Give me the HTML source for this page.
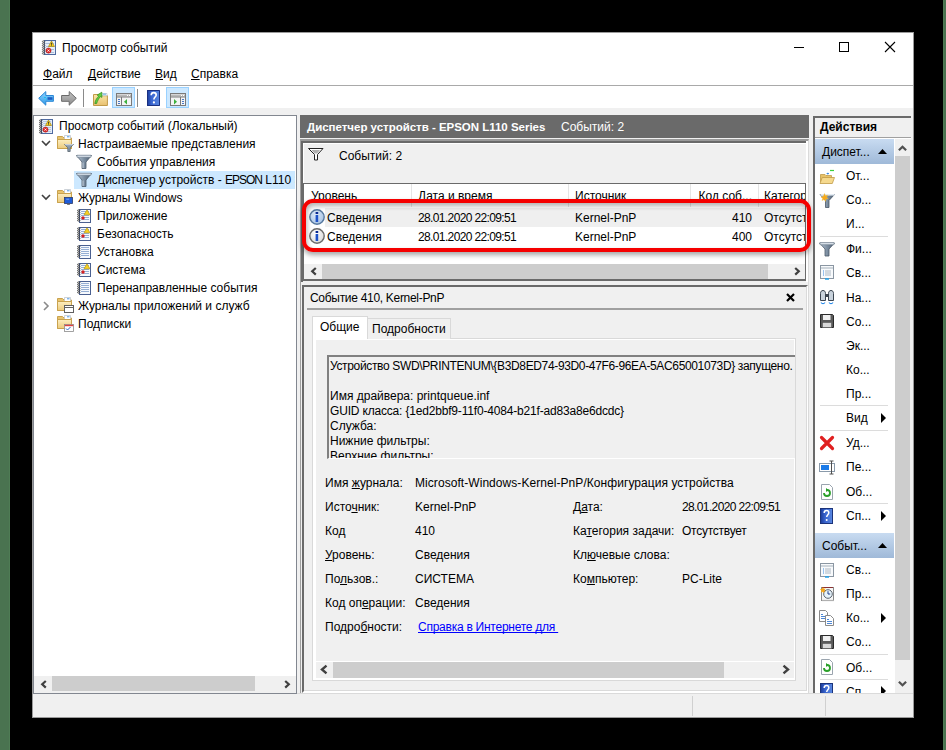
<!DOCTYPE html>
<html><head><meta charset="utf-8">
<style>
*{margin:0;padding:0;box-sizing:border-box}
html,body{width:946px;height:750px;overflow:hidden;background:#000;font-family:"Liberation Sans",sans-serif;font-size:12px;color:#000}
.a{position:absolute}
.t{position:absolute;white-space:nowrap;line-height:16px;height:16px}
.b{font-weight:bold}
u{text-decoration:underline;text-underline-offset:1px;text-decoration-skip-ink:none}
svg{position:absolute;overflow:visible}
.sep{position:absolute;height:1px;background:#dcdcdc}
</style></head><body>
<div class="a" style="left:0;top:0;width:10px;height:750px;background:#4a7350"></div>
<div class="a" style="left:9px;top:0;width:1px;height:750px;background:#4f7d55"></div>
<div class="a" style="left:943px;top:0;width:3px;height:750px;background:#4a7350"></div>
<div class="a" style="left:943px;top:0;width:1px;height:750px;background:#4f7d55"></div>

<!-- window -->
<div class="a" style="left:32px;top:32px;width:882px;height:686px;background:#f0f0f0;border:1px solid #9a9a9a"></div>
<div class="a" style="left:33px;top:33px;width:880px;height:75px;background:#fff"></div>
<div class="a" style="left:33px;top:85px;width:880px;height:1px;background:#a9a9a9"></div>

<!-- TITLE -->
<svg style="left:42px;top:40px" width="14" height="15" viewBox="0 0 14 15">
 <rect x="2.5" y="0.5" width="11" height="14" fill="#e6eef8" stroke="#4f6aa0"/>
 <path d="M4 3.5h8M4 6.5h8M4 9.5h8M4 12.5h8" stroke="#a9bedc"/>
 <ellipse cx="1.6" cy="1.5" rx="1.2" ry=".75" fill="none" stroke="#4a4a4a" stroke-width=".8"/><ellipse cx="1.6" cy="3.5" rx="1.2" ry=".75" fill="none" stroke="#4a4a4a" stroke-width=".8"/><ellipse cx="1.6" cy="5.5" rx="1.2" ry=".75" fill="none" stroke="#4a4a4a" stroke-width=".8"/><ellipse cx="1.6" cy="7.5" rx="1.2" ry=".75" fill="none" stroke="#4a4a4a" stroke-width=".8"/><ellipse cx="1.6" cy="9.5" rx="1.2" ry=".75" fill="none" stroke="#4a4a4a" stroke-width=".8"/><ellipse cx="1.6" cy="11.5" rx="1.2" ry=".75" fill="none" stroke="#4a4a4a" stroke-width=".8"/><ellipse cx="1.6" cy="13.5" rx="1.2" ry=".75" fill="none" stroke="#4a4a4a" stroke-width=".8"/>
 <path d="M9.5 1l3 5.5h-6z" fill="#f8d020" stroke="#9a7a00" stroke-width=".6"/>
 <path d="M9.5 2.8v2M9.5 5.3v.6" stroke="#333" stroke-width=".9"/>
 <circle cx="6.5" cy="10.6" r="2.6" fill="#e02828" stroke="#a01818" stroke-width=".5"/>
 <path d="M5.5 9.6l2 2M7.5 9.6l-2 2" stroke="#fff" stroke-width=".9"/>
</svg>
<div class="t" style="left:62px;top:40px">Просмотр событий</div>
<div class="a" style="left:794px;top:47px;width:10px;height:1px;background:#000"></div>
<div class="a" style="left:839px;top:42px;width:10px;height:10px;border:1px solid #000"></div>
<svg style="left:885px;top:42px" width="10" height="10" viewBox="0 0 10 10"><path d="M0 0L10 10M10 0L0 10" stroke="#000" stroke-width="1.1"/></svg>

<!-- MENU -->
<div class="t" style="left:43px;top:66px"><u>Ф</u>айл</div>
<div class="t" style="left:88px;top:66px"><u>Д</u>ействие</div>
<div class="t" style="left:155px;top:66px"><u>В</u>ид</div>
<div class="t" style="left:191px;top:66px"><u>С</u>правка</div>

<!-- TOOLBAR -->
<svg style="left:38px;top:91px" width="16" height="15" viewBox="0 0 16 15">
 <defs><linearGradient id="bk" x1="0" y1="0" x2="0" y2="1"><stop offset="0" stop-color="#8fd4ff"/><stop offset="1" stop-color="#2f9be8"/></linearGradient></defs>
 <path d="M0.7 7.3L7.8 0.6v3.9h7.6v5.8H7.8v3.9z" fill="url(#bk)" stroke="#2a86d6" stroke-width="1"/>
 <path d="M9.5 6.2h5v2.6h-5z" fill="#1d5cc0"/>
 <path d="M6 6.5h2M8 8h1" stroke="#19c0f0" stroke-width="1"/>
</svg>
<svg style="left:61px;top:91px" width="16" height="15" viewBox="0 0 16 15">
 <defs><linearGradient id="fw" x1="0" y1="0" x2="0" y2="1"><stop offset="0" stop-color="#c4c4c4"/><stop offset="1" stop-color="#8a8a8a"/></linearGradient></defs>
 <path d="M15.3 7.3L8.2 0.6v3.9H0.6v5.8h7.6v3.9z" fill="url(#fw)" stroke="#6a6a6a" stroke-width="1"/>
</svg>
<div class="a" style="left:83px;top:89px;width:1px;height:18px;background:#8a8a8a"></div>
<svg style="left:93px;top:91px" width="15" height="15" viewBox="0 0 15 15">
 <defs><linearGradient id="fo" x1="0" y1="0" x2="0" y2="1"><stop offset="0" stop-color="#fbe6a8"/><stop offset="1" stop-color="#e8c070"/></linearGradient></defs>
 <path d="M0.5 3.5h5l1 1.2h7.9v9.8H0.5z" fill="url(#fo)" stroke="#c09a48"/>
 <path d="M9 2.5h5v2.2H9z" fill="#fff" stroke="#a8b8c8" stroke-width=".6"/>
 <path d="M10 3.2h3" stroke="#3a9ae0" stroke-width=".8"/>
 <path d="M1.8 12.5C2.5 9 3.8 7 5.6 5.2L4.2 4.1 8.8 1.2 8.9 6.4 7.3 5.6C5.8 7.5 4.6 9.6 3.6 12.5z" fill="#62d040" stroke="#2e8a1e" stroke-width=".7"/>
</svg>
<div class="a" style="left:112px;top:87px;width:23px;height:21px;background:#cce8ff;border:1px solid #99d1ff"></div>
<svg style="left:116px;top:93px" width="16" height="13" viewBox="0 0 16 13">
 <rect x="0.5" y="0.5" width="15" height="12" fill="#f4f4f4" stroke="#7a7a7a"/>
 <path d="M1 2.5h14" stroke="#b8b8b8" stroke-width="2"/>
 <path d="M11 2.5h1M13 2.5h1" stroke="#fff" stroke-width="1"/>
 <path d="M1 4h14" stroke="#7a7a7a"/>
 <path d="M5.5 4v8.5" stroke="#7a7a7a"/>
 <path d="M2 6.5h2M2 8.5h2M2 10.5h2" stroke="#4a7ac8" stroke-width="1"/>
 <path d="M11 6v5.5L8 8.7z" fill="#3cb03c"/>
</svg>
<div class="a" style="left:137px;top:89px;width:1px;height:18px;background:#8a8a8a"></div>
<svg style="left:147px;top:90px" width="13" height="16" viewBox="0 0 13 16">
 <defs><linearGradient id="hp" x1="0" y1="0" x2="1" y2="0"><stop offset="0" stop-color="#1a3a98"/><stop offset=".35" stop-color="#3a66d0"/><stop offset="1" stop-color="#5a88e0"/></linearGradient></defs>
 <rect x="0" y="0" width="13" height="16" fill="url(#hp)"/>
 <path d="M0.5 0.5h12v15h-12z" fill="none" stroke="#1a3080" stroke-width="1"/>
 <path d="M4.2 5.2C4.2 3.4 5.2 2.6 6.7 2.6S9.2 3.5 9.2 5c0 2-2.3 2.2-2.3 4.6" fill="none" stroke="#fff" stroke-width="1.6"/>
 <circle cx="6.9" cy="12.4" r="1.1" fill="#fff"/>
</svg>
<div class="a" style="left:166px;top:87px;width:23px;height:21px;background:#cce8ff;border:1px solid #99d1ff"></div>
<svg style="left:170px;top:93px" width="16" height="13" viewBox="0 0 16 13">
 <rect x="0.5" y="0.5" width="15" height="12" fill="#f4f4f4" stroke="#7a7a7a"/>
 <path d="M1 2.5h14" stroke="#b8b8b8" stroke-width="2"/>
 <path d="M11 2.5h1M13 2.5h1" stroke="#fff" stroke-width="1"/>
 <path d="M1 4h14" stroke="#7a7a7a"/>
 <path d="M10.5 4v8.5" stroke="#7a7a7a"/>
 <path d="M12 6.5h2M12 8.5h2M12 10.5h2" stroke="#4a7ac8" stroke-width="1"/>
 <path d="M4 6v5.5L7 8.7z" fill="#3cb03c"/>
</svg>

<!-- LEFT PANE -->
<div class="a" style="left:33px;top:115px;width:264px;height:579px;background:#fff;border:1px solid #828790"></div>
<!-- tree -->
<svg style="left:39px;top:119px" width="14" height="15" viewBox="0 0 14 15">
 <rect x="2.5" y="0.5" width="11" height="14" fill="#e6eef8" stroke="#4f6aa0"/>
 <path d="M4 2.5h8M4 4.5h8M4 6.5h8M4 8.5h8M4 10.5h8M4 12.5h8" stroke="#a9bedc" stroke-width=".8"/>
 <ellipse cx="1.7" cy="1.5" rx="1.2" ry=".7" fill="none" stroke="#3a3a3a" stroke-width=".8"/><ellipse cx="1.7" cy="3.5" rx="1.2" ry=".7" fill="none" stroke="#3a3a3a" stroke-width=".8"/><ellipse cx="1.7" cy="5.5" rx="1.2" ry=".7" fill="none" stroke="#3a3a3a" stroke-width=".8"/><ellipse cx="1.7" cy="7.5" rx="1.2" ry=".7" fill="none" stroke="#3a3a3a" stroke-width=".8"/><ellipse cx="1.7" cy="9.5" rx="1.2" ry=".7" fill="none" stroke="#3a3a3a" stroke-width=".8"/><ellipse cx="1.7" cy="11.5" rx="1.2" ry=".7" fill="none" stroke="#3a3a3a" stroke-width=".8"/><ellipse cx="1.7" cy="13.5" rx="1.2" ry=".7" fill="none" stroke="#3a3a3a" stroke-width=".8"/>
 <path d="M9.5 1l3 5.5h-6z" fill="#f8d020" stroke="#9a7a00" stroke-width=".6"/>
 <path d="M9.5 2.8v2M9.5 5.3v.6" stroke="#333" stroke-width=".9"/>
 <circle cx="6.5" cy="10.6" r="2.6" fill="#e02828" stroke="#a01818" stroke-width=".5"/>
 <path d="M5.5 9.6l2 2M7.5 9.6l-2 2" stroke="#fff" stroke-width=".9"/>
</svg>
<div class="t" style="left:59px;top:118px">Просмотр событий (Локальный)</div>
<svg style="left:41px;top:140px" width="10" height="7" viewBox="0 0 10 7"><path d="M1 1l4 4 4-4" fill="none" stroke="#404040" stroke-width="1.6"/></svg>
<svg style="left:57px;top:135px" width="17" height="17" viewBox="0 0 17 17">
 <defs><linearGradient id="fd135" x1="0" y1="0" x2="0" y2="1"><stop offset="0" stop-color="#fdeec0"/><stop offset="1" stop-color="#eccb7c"/></linearGradient></defs>
 <path d="M0.5 1.5h5l1.5 1.5h7.5v10.5H0.5z" fill="#e8c46e" stroke="#c9a24e"/>
 <path d="M7.5 0.5h6v4h-6z" fill="#fff" stroke="#b8c0c8" stroke-width=".7"/>
 <path d="M10 1.8h2.5" stroke="#3a8ae0" stroke-width=".9"/>
 <path d="M0.5 4.5h14v9H0.5z" fill="url(#fd135)" stroke="#c9a24e"/>
 <path d="M7.5 9.5h9l-3.3 3.3v3.7h-2.4v-3.7z" fill="#8a9aaa" stroke="#4d5a66" stroke-width=".7"/><path d="M8 9.7h8" stroke="#dfe6ee" stroke-width="1"/>
</svg>
<div class="t" style="left:78px;top:136px">Настраиваемые представления</div>
<svg style="left:76px;top:154px" width="16" height="15" viewBox="0 0 16 15">
 <defs><linearGradient id="fg1" x1="0" x2="1"><stop offset="0" stop-color="#b8c6d4"/><stop offset=".5" stop-color="#7d8fa2"/><stop offset="1" stop-color="#4e5e70"/></linearGradient></defs>
 <path d="M0.5 1.5h15l-5.5 6.5v6.5h-4v-6.5z" fill="url(#fg1)" stroke="#4a5868" stroke-width=".8"/>
 <path d="M1 1.2h14v2H1z" fill="#e4ecf4" stroke="#6a7888" stroke-width=".6"/>
 <path d="M7 8.5v5.5" stroke="#c8d4e0" stroke-width=".9"/>
</svg>
<div class="t" style="left:97px;top:154px">События управления</div>
<div class="a" style="left:74px;top:171px;width:221px;height:18px;background:#cce8ff"></div>
<svg style="left:76px;top:172px" width="16" height="15" viewBox="0 0 16 15">
 <defs><linearGradient id="fg2" x1="0" x2="1"><stop offset="0" stop-color="#b8c6d4"/><stop offset=".5" stop-color="#7d8fa2"/><stop offset="1" stop-color="#4e5e70"/></linearGradient></defs>
 <path d="M0.5 1.5h15l-5.5 6.5v6.5h-4v-6.5z" fill="url(#fg2)" stroke="#4a5868" stroke-width=".8"/>
 <path d="M1 1.2h14v2H1z" fill="#e4ecf4" stroke="#6a7888" stroke-width=".6"/>
 <path d="M7 8.5v5.5" stroke="#c8d4e0" stroke-width=".9"/>
</svg>
<div class="t" style="left:97px;top:172px;width:198px;overflow:hidden">Диспетчер устройств - <span style="letter-spacing:-1px">EPSON</span> L110 Series</div>
<svg style="left:41px;top:194px" width="10" height="7" viewBox="0 0 10 7"><path d="M1 1l4 4 4-4" fill="none" stroke="#404040" stroke-width="1.6"/></svg>
<svg style="left:57px;top:189px" width="17" height="17" viewBox="0 0 17 17">
 <defs><linearGradient id="fd189" x1="0" y1="0" x2="0" y2="1"><stop offset="0" stop-color="#fdeec0"/><stop offset="1" stop-color="#eccb7c"/></linearGradient></defs>
 <path d="M0.5 1.5h5l1.5 1.5h7.5v10.5H0.5z" fill="#e8c46e" stroke="#c9a24e"/>
 <path d="M7.5 0.5h6v4h-6z" fill="#fff" stroke="#b8c0c8" stroke-width=".7"/>
 <path d="M10 1.8h2.5" stroke="#3a8ae0" stroke-width=".9"/>
 <path d="M0.5 4.5h14v9H0.5z" fill="url(#fd189)" stroke="#c9a24e"/>
 <rect x="7.5" y="8.5" width="8" height="6" fill="#1e5cd8" stroke="#2a3a6a" stroke-width=".8"/><path d="M9.2 10.2h3" stroke="#8ab8ff" stroke-width=".8"/><path d="M10 15.5h3M11.5 14.5v1" stroke="#666" stroke-width=".8"/>
</svg>
<div class="t" style="left:78px;top:190px">Журналы Windows</div>
<svg style="left:77px;top:209px" width="14" height="14" viewBox="0 0 14 14">
 <rect x="2.5" y="0.5" width="11" height="13" fill="#f6f9fd" stroke="#4a6090"/>
 <path d="M4 2.5h8M4 4.5h8M4 6.5h8M4 8.5h8M4 10.5h8" stroke="#7e9cc8" stroke-width=".8"/>
 <ellipse cx="1.7" cy="1.5" rx="1.2" ry=".7" fill="none" stroke="#3a3a3a" stroke-width=".8"/><ellipse cx="1.7" cy="3.5" rx="1.2" ry=".7" fill="none" stroke="#3a3a3a" stroke-width=".8"/><ellipse cx="1.7" cy="5.5" rx="1.2" ry=".7" fill="none" stroke="#3a3a3a" stroke-width=".8"/><ellipse cx="1.7" cy="7.5" rx="1.2" ry=".7" fill="none" stroke="#3a3a3a" stroke-width=".8"/><ellipse cx="1.7" cy="9.5" rx="1.2" ry=".7" fill="none" stroke="#3a3a3a" stroke-width=".8"/><ellipse cx="1.7" cy="11.5" rx="1.2" ry=".7" fill="none" stroke="#3a3a3a" stroke-width=".8"/><path d="M10 0.8l3 5h-6z" fill="#f8d020" stroke="#b09000" stroke-width=".6"/><circle cx="6" cy="9" r="1.7" fill="#d42020"/>
</svg>
<div class="t" style="left:97px;top:208px">Приложение</div>
<svg style="left:77px;top:227px" width="14" height="14" viewBox="0 0 14 14">
 <rect x="2.5" y="0.5" width="11" height="13" fill="#f6f9fd" stroke="#4a6090"/>
 <path d="M4 2.5h8M4 4.5h8M4 6.5h8M4 8.5h8M4 10.5h8" stroke="#7e9cc8" stroke-width=".8"/>
 <ellipse cx="1.7" cy="1.5" rx="1.2" ry=".7" fill="none" stroke="#3a3a3a" stroke-width=".8"/><ellipse cx="1.7" cy="3.5" rx="1.2" ry=".7" fill="none" stroke="#3a3a3a" stroke-width=".8"/><ellipse cx="1.7" cy="5.5" rx="1.2" ry=".7" fill="none" stroke="#3a3a3a" stroke-width=".8"/><ellipse cx="1.7" cy="7.5" rx="1.2" ry=".7" fill="none" stroke="#3a3a3a" stroke-width=".8"/><ellipse cx="1.7" cy="9.5" rx="1.2" ry=".7" fill="none" stroke="#3a3a3a" stroke-width=".8"/><ellipse cx="1.7" cy="11.5" rx="1.2" ry=".7" fill="none" stroke="#3a3a3a" stroke-width=".8"/><path d="M10 0.8l3 5h-6z" fill="#f8d020" stroke="#b09000" stroke-width=".6"/><circle cx="6" cy="9" r="1.7" fill="#d42020"/>
</svg>
<div class="t" style="left:97px;top:226px">Безопасность</div>
<svg style="left:77px;top:245px" width="14" height="14" viewBox="0 0 14 14">
 <rect x="2.5" y="0.5" width="11" height="13" fill="#f6f9fd" stroke="#4a6090"/>
 <path d="M4 2.5h8M4 4.5h8M4 6.5h8M4 8.5h8M4 10.5h8" stroke="#7e9cc8" stroke-width=".8"/>
 <ellipse cx="1.7" cy="1.5" rx="1.2" ry=".7" fill="none" stroke="#3a3a3a" stroke-width=".8"/><ellipse cx="1.7" cy="3.5" rx="1.2" ry=".7" fill="none" stroke="#3a3a3a" stroke-width=".8"/><ellipse cx="1.7" cy="5.5" rx="1.2" ry=".7" fill="none" stroke="#3a3a3a" stroke-width=".8"/><ellipse cx="1.7" cy="7.5" rx="1.2" ry=".7" fill="none" stroke="#3a3a3a" stroke-width=".8"/><ellipse cx="1.7" cy="9.5" rx="1.2" ry=".7" fill="none" stroke="#3a3a3a" stroke-width=".8"/><ellipse cx="1.7" cy="11.5" rx="1.2" ry=".7" fill="none" stroke="#3a3a3a" stroke-width=".8"/>
</svg>
<div class="t" style="left:97px;top:244px">Установка</div>
<svg style="left:77px;top:263px" width="14" height="14" viewBox="0 0 14 14">
 <rect x="2.5" y="0.5" width="11" height="13" fill="#f6f9fd" stroke="#4a6090"/>
 <path d="M4 2.5h8M4 4.5h8M4 6.5h8M4 8.5h8M4 10.5h8" stroke="#7e9cc8" stroke-width=".8"/>
 <ellipse cx="1.7" cy="1.5" rx="1.2" ry=".7" fill="none" stroke="#3a3a3a" stroke-width=".8"/><ellipse cx="1.7" cy="3.5" rx="1.2" ry=".7" fill="none" stroke="#3a3a3a" stroke-width=".8"/><ellipse cx="1.7" cy="5.5" rx="1.2" ry=".7" fill="none" stroke="#3a3a3a" stroke-width=".8"/><ellipse cx="1.7" cy="7.5" rx="1.2" ry=".7" fill="none" stroke="#3a3a3a" stroke-width=".8"/><ellipse cx="1.7" cy="9.5" rx="1.2" ry=".7" fill="none" stroke="#3a3a3a" stroke-width=".8"/><ellipse cx="1.7" cy="11.5" rx="1.2" ry=".7" fill="none" stroke="#3a3a3a" stroke-width=".8"/><path d="M10 0.8l3 5h-6z" fill="#f8d020" stroke="#b09000" stroke-width=".6"/><circle cx="6" cy="9" r="1.7" fill="#d42020"/>
</svg>
<div class="t" style="left:97px;top:262px">Система</div>
<svg style="left:77px;top:281px" width="14" height="14" viewBox="0 0 14 14">
 <rect x="2.5" y="0.5" width="11" height="13" fill="#f6f9fd" stroke="#4a6090"/>
 <path d="M4 2.5h8M4 4.5h8M4 6.5h8M4 8.5h8M4 10.5h8" stroke="#7e9cc8" stroke-width=".8"/>
 <ellipse cx="1.7" cy="1.5" rx="1.2" ry=".7" fill="none" stroke="#3a3a3a" stroke-width=".8"/><ellipse cx="1.7" cy="3.5" rx="1.2" ry=".7" fill="none" stroke="#3a3a3a" stroke-width=".8"/><ellipse cx="1.7" cy="5.5" rx="1.2" ry=".7" fill="none" stroke="#3a3a3a" stroke-width=".8"/><ellipse cx="1.7" cy="7.5" rx="1.2" ry=".7" fill="none" stroke="#3a3a3a" stroke-width=".8"/><ellipse cx="1.7" cy="9.5" rx="1.2" ry=".7" fill="none" stroke="#3a3a3a" stroke-width=".8"/><ellipse cx="1.7" cy="11.5" rx="1.2" ry=".7" fill="none" stroke="#3a3a3a" stroke-width=".8"/>
</svg>
<div class="t" style="left:97px;top:280px">Перенаправленные события</div>
<svg style="left:43px;top:301px" width="7" height="10" viewBox="0 0 7 10"><path d="M1 1l4 4-4 4" fill="none" stroke="#8a8a8a" stroke-width="1.6"/></svg>
<svg style="left:57px;top:297px" width="17" height="17" viewBox="0 0 17 17">
 <defs><linearGradient id="fd297" x1="0" y1="0" x2="0" y2="1"><stop offset="0" stop-color="#fdeec0"/><stop offset="1" stop-color="#eccb7c"/></linearGradient></defs>
 <path d="M0.5 1.5h5l1.5 1.5h7.5v10.5H0.5z" fill="#e8c46e" stroke="#c9a24e"/>
 <path d="M7.5 0.5h6v4h-6z" fill="#fff" stroke="#b8c0c8" stroke-width=".7"/>
 <path d="M10 1.8h2.5" stroke="#3a8ae0" stroke-width=".9"/>
 <path d="M0.5 4.5h14v9H0.5z" fill="url(#fd297)" stroke="#c9a24e"/>
 <rect x="7.5" y="8.5" width="9" height="7" fill="#fff" stroke="#606060" stroke-width="1"/><path d="M7.5 10.5h9" stroke="#606060" stroke-width="1"/>
</svg>
<div class="t" style="left:78px;top:298px">Журналы приложений и служб</div>
<svg style="left:57px;top:315px" width="17" height="17" viewBox="0 0 17 17">
 <defs><linearGradient id="fd315" x1="0" y1="0" x2="0" y2="1"><stop offset="0" stop-color="#fdeec0"/><stop offset="1" stop-color="#eccb7c"/></linearGradient></defs>
 <path d="M0.5 1.5h5l1.5 1.5h7.5v10.5H0.5z" fill="#e8c46e" stroke="#c9a24e"/>
 <path d="M7.5 0.5h6v4h-6z" fill="#fff" stroke="#b8c0c8" stroke-width=".7"/>
 <path d="M10 1.8h2.5" stroke="#3a8ae0" stroke-width=".9"/>
 <path d="M0.5 4.5h14v9H0.5z" fill="url(#fd315)" stroke="#c9a24e"/>
 <rect x="7.5" y="9.5" width="9" height="7" fill="#fff" stroke="#8a8a8a" stroke-width=".8"/><path d="M7.8 10.5h8.4" stroke="#e04040" stroke-width="1.4"/><path d="M9 13.5l1.5 1.5 3-3" fill="none" stroke="#2a6acc" stroke-width="1"/>
</svg>
<div class="t" style="left:78px;top:316px">Подписки</div>

<!-- left scrollbar -->
<div class="a" style="left:34px;top:676px;width:262px;height:17px;background:#f0f0f0"></div>
<div class="a" style="left:52px;top:676px;width:203px;height:15px;background:#cdcdcd"></div>
<svg style="left:40px;top:680px" width="7" height="9" viewBox="0 0 7 9"><path d="M5.8 1L2.2 4.3l3.6 3.3" fill="none" stroke="#404040" stroke-width="2.2"/></svg>
<svg style="left:284px;top:680px" width="7" height="9" viewBox="0 0 7 9"><path d="M1.2 1l3.6 3.3-3.6 3.3" fill="none" stroke="#404040" stroke-width="2.2"/></svg>


<!-- CENTER -->
<!-- center header -->
<div class="a" style="left:300px;top:115px;width:509px;height:23px;background:#6a6a6a"></div>
<div class="t b" style="left:307px;top:119px;color:#fff;font-size:11.5px;letter-spacing:-0.02px">Диспетчер устройств - EPSON L110 Series</div>
<div class="t" style="left:561px;top:119px;color:#fff">Событий: 2</div>

<!-- list frame -->
<div class="a" style="left:300px;top:139px;width:509px;height:144px;background:#f0f0f0;border-top:2px solid #9a9a9a;border-left:1px solid #a0a0a0;border-right:1px solid #dadada"></div>
<div class="a" style="left:301px;top:141px;width:506px;height:2px;background:#6a6a6a"></div>
<div class="a" style="left:301px;top:141px;width:2px;height:141px;background:#6a6a6a"></div>
<div class="a" style="left:806px;top:141px;width:2px;height:141px;background:#fff"></div>
<div class="a" style="left:303px;top:143px;width:503px;height:1px;background:#fff"></div>
<div class="a" style="left:303px;top:143px;width:1px;height:40px;background:#fff"></div>
<svg style="left:308px;top:148px" width="16" height="13" viewBox="0 0 16 13">
 <path d="M0.5 0.5h14.5l-5.5 6v5.5h-3v-5.5z" fill="#fff" stroke="#222" stroke-width="1"/>
 <path d="M3.5 2h8.5l-3 3.5h-2.5z" fill="#b0b0b0"/>
</svg>
<div class="t" style="left:339px;top:148px">Событий: 2</div>

<!-- table -->
<div class="a" style="left:303px;top:183px;width:503px;height:98px;background:#fff;border:1px solid #6a6a6a;border-bottom:2px solid #6a6a6a"></div>
<div class="a" style="left:411px;top:184px;width:1px;height:23px;background:#e5e5e5"></div>
<div class="a" style="left:568px;top:184px;width:1px;height:23px;background:#e5e5e5"></div>
<div class="a" style="left:690px;top:184px;width:1px;height:23px;background:#e5e5e5"></div>
<div class="a" style="left:758px;top:184px;width:1px;height:23px;background:#e5e5e5"></div>
<div class="t" style="left:311px;top:188px">Уровень</div>
<div class="t" style="left:418px;top:188px">Дата и время</div>
<div class="t" style="left:575px;top:188px">Источник</div>
<div class="t" style="left:686px;top:188px;width:66px;text-align:right">Код соб...</div>
<div class="t" style="left:764px;top:188px;width:41px;overflow:hidden">Категория</div>

<div class="a" style="left:325px;top:208px;width:480px;height:19px;background:#efefef"></div>
<svg style="left:309px;top:209px" width="16" height="16" viewBox="0 0 16 16">
 <defs><radialGradient id="ib" cx="40%" cy="35%" r="70%"><stop offset="0" stop-color="#dce9f7"/><stop offset="1" stop-color="#a6c2e4"/></radialGradient>
 <radialGradient id="iw" cx="40%" cy="35%" r="70%"><stop offset="0" stop-color="#ffffff"/><stop offset="1" stop-color="#d8d8d8"/></radialGradient></defs>
 <circle cx="8" cy="8" r="7.2" fill="url(#ib)" stroke="#56789e" stroke-width="1.4"/>
 <rect x="6.6" y="6" width="2.6" height="7" fill="#1e52c8"/><rect x="6.6" y="3" width="2.6" height="2" fill="#0a2a90"/>
</svg>
<svg style="left:309px;top:228px" width="16" height="16" viewBox="0 0 16 16">
 <circle cx="8" cy="8" r="7.2" fill="url(#iw)" stroke="#6a6a6a" stroke-width="1.4"/>
 <rect x="6.6" y="6" width="2.6" height="7" fill="#1e52c8"/><rect x="6.6" y="3" width="2.6" height="2" fill="#0a2a90"/>
</svg>
<div class="t" style="left:327px;top:210px">Сведения</div>
<div class="t" style="left:418px;top:210px;letter-spacing:-0.63px">28.01.2020 22:09:51</div>
<div class="t" style="left:575px;top:210px">Kernel-PnP</div>
<div class="t" style="left:686px;top:210px;width:66px;text-align:right">410</div>
<div class="t" style="left:764px;top:210px;width:41px;overflow:hidden">Отсутствует</div>
<div class="t" style="left:327px;top:229px">Сведения</div>
<div class="t" style="left:418px;top:229px;letter-spacing:-0.63px">28.01.2020 22:09:51</div>
<div class="t" style="left:575px;top:229px">Kernel-PnP</div>
<div class="t" style="left:686px;top:229px;width:66px;text-align:right">400</div>
<div class="t" style="left:764px;top:229px;width:41px;overflow:hidden">Отсутствует</div>

<!-- list hscroll -->
<div class="a" style="left:304px;top:264px;width:501px;height:15px;background:#f0f0f0"></div>
<div class="a" style="left:322px;top:264px;width:446px;height:15px;background:#cdcdcd"></div>
<svg style="left:310px;top:267px" width="7" height="9" viewBox="0 0 7 9"><path d="M5.8 1L2.2 4.3l3.6 3.3" fill="none" stroke="#404040" stroke-width="2.2"/></svg>
<svg style="left:794px;top:267px" width="7" height="9" viewBox="0 0 7 9"><path d="M1.2 1l3.6 3.3-3.6 3.3" fill="none" stroke="#404040" stroke-width="2.2"/></svg>

<!-- red highlight box -->
<div class="a" style="left:302px;top:199px;width:509px;height:53px;border:4px solid #f50000;border-radius:11px;box-shadow:0 3px 5px rgba(0,0,0,.35), inset 1px 3px 5px rgba(0,0,0,.3)"></div>

<!-- detail pane -->
<div class="a" style="left:300px;top:283px;width:509px;height:411px;background:#f0f0f0;border-left:1px solid #a0a0a0;border-right:1px solid #dadada;border-bottom:1px solid #dadada"></div>
<div class="a" style="left:302px;top:285px;width:506px;height:408px;background:#f0f0f0;border-top:2px solid #6a6a6a;border-left:2px solid #6a6a6a;border-right:2px solid #fff;border-bottom:2px solid #fff"></div>
<div class="a" style="left:304px;top:690px;width:502px;height:1px;background:#dadada"></div>
<div class="a" style="left:806px;top:287px;width:1px;height:404px;background:#dadada"></div>
<div class="t" style="left:310px;top:290px;letter-spacing:-0.3px">Событие 410, Kernel-PnP</div>
<svg style="left:786px;top:293px" width="9" height="9" viewBox="0 0 9 9"><path d="M1 1l7 7M8 1L1 8" stroke="#000" stroke-width="2.2"/></svg>
<div class="a" style="left:307px;top:308px;width:496px;height:2px;background:#a0a0a0"></div>

<!-- tabs -->
<div class="a" style="left:312px;top:338px;width:484px;height:343px;background:#fff;border:1px solid #d9d9d9"></div>
<div class="a" style="left:316px;top:340px;width:478px;height:321px;background:#f0f0f0"></div>
<div class="a" style="left:367px;top:318px;width:84px;height:21px;background:#f0f0f0;border:1px solid #d9d9d9;border-bottom:none"></div>
<div class="a" style="left:312px;top:316px;width:56px;height:23px;background:#fff;border:1px solid #d9d9d9;border-bottom:none"></div>
<div class="t" style="left:320px;top:319px">Общие</div>
<div class="t" style="left:372px;top:321px">Подробности</div>

<!-- textbox -->
<div class="a" style="left:327px;top:355px;width:468px;height:104px;background:#f0f0f0;border-top:2px solid #808080;border-left:2px solid #808080;border-bottom:1px solid #fff"></div>
<div class="t" style="left:330px;top:358px;letter-spacing:-0.35px;width:465px;overflow:hidden">Устройство SWD\PRINTENUM\{B3D8ED74-93D0-47F6-96EA-5AC65001073D} запущено.</div>
<div class="t" style="left:330px;top:388px">Имя драйвера: printqueue.inf</div>
<div class="t" style="left:330px;top:403px;letter-spacing:-0.18px">GUID класса: {1ed2bbf9-11f0-4084-b21f-ad83a8e6dcdc}</div>
<div class="t" style="left:330px;top:418px">Служба:</div>
<div class="t" style="left:330px;top:433px">Нижние фильтры:</div>
<div class="a" style="left:329px;top:448px;width:300px;height:10px;overflow:hidden"><div class="t" style="left:1px;top:0">Верхние фильтры:</div></div>

<!-- properties -->
<div class="t" style="left:325px;top:475px">Имя <u>ж</u>урнала:</div>
<div class="t" style="left:415px;top:475px;letter-spacing:0.06px">Microsoft-Windows-Kernel-PnP/Конфигурация устройства</div>
<div class="t" style="left:325px;top:499px">Исто<u>ч</u>ник:</div>
<div class="t" style="left:415px;top:499px">Kernel-PnP</div>
<div class="t" style="left:573px;top:499px">Д<u>а</u>та:</div>
<div class="t" style="left:682px;top:499px;letter-spacing:-0.63px">28.01.2020 22:09:51</div>
<div class="t" style="left:325px;top:523px">Код</div>
<div class="t" style="left:415px;top:523px">410</div>
<div class="t" style="left:573px;top:523px">Ка<u>т</u>егория задачи:</div>
<div class="t" style="left:682px;top:523px;letter-spacing:-0.25px">Отсутствует</div>
<div class="t" style="left:325px;top:547px"><u>У</u>ровень:</div>
<div class="t" style="left:415px;top:547px">Сведения</div>
<div class="t" style="left:573px;top:547px">Кл<u>ю</u>чевые слова:</div>
<div class="t" style="left:325px;top:571px">По<u>л</u>ьзов.:</div>
<div class="t" style="left:415px;top:571px">СИСТЕМА</div>
<div class="t" style="left:573px;top:571px">Ко<u>м</u>пьютер:</div>
<div class="t" style="left:682px;top:571px">PC-Lite</div>
<div class="t" style="left:325px;top:595px">Код оп<u>е</u>рации:</div>
<div class="t" style="left:415px;top:595px">Сведения</div>
<div class="t" style="left:325px;top:619px">Подро<u>б</u>ности:</div>
<div class="t" style="left:418px;top:619px;color:#0000ff;letter-spacing:-0.25px"><u>Справка в Интернете для&nbsp;</u></div>

<!-- detail hscroll -->
<div class="a" style="left:316px;top:662px;width:478px;height:16px;background:#f0f0f0"></div>
<div class="a" style="left:333px;top:662px;width:391px;height:16px;background:#cdcdcd"></div>
<svg style="left:320px;top:665px" width="8" height="9" viewBox="0 0 8 9"><path d="M6.5 0.7L2 4.5l4.5 3.8" fill="none" stroke="#404040" stroke-width="2.4"/></svg>
<svg style="left:782px;top:665px" width="8" height="9" viewBox="0 0 8 9"><path d="M1.5 0.7L6 4.5 1.5 8.3" fill="none" stroke="#404040" stroke-width="2.4"/></svg>

<!-- RIGHT PANE -->
<div class="a" style="left:813px;top:116px;width:98px;height:577px;background:#fff;border-left:2px solid #6a6a6a;border-top:2px solid #6a6a6a"></div>
<div class="a" style="left:815px;top:118px;width:96px;height:20px;background:#f0f0f0;border-bottom:1px solid #a0a0a0"></div>
<div class="t b" style="left:820px;top:119px">Действия</div>
<div class="a" style="left:815px;top:139px;width:79px;height:25px;background:linear-gradient(#c8dbf1,#9fb9d8)"></div>
<div class="t" style="left:822px;top:144px">Диспет...</div>
<svg style="left:878px;top:149px" width="9" height="5" viewBox="0 0 9 5"><path d="M0 5L4.5 0 9 5z" fill="#000"/></svg>
<div class="a" style="left:815px;top:533px;width:79px;height:25px;background:linear-gradient(#c8dbf1,#9fb9d8)"></div>
<div class="t" style="left:822px;top:538px">Событ...</div>
<svg style="left:878px;top:543px" width="9" height="5" viewBox="0 0 9 5"><path d="M0 5L4.5 0 9 5z" fill="#000"/></svg>
<div class="a" style="left:895px;top:139px;width:16px;height:554px;background:#f0f0f0"></div>
<div class="a" style="left:895px;top:156px;width:15px;height:504px;background:#cdcdcd"></div>
<svg style="left:898px;top:145px" width="9" height="6" viewBox="0 0 9 6"><path d="M0.9 5.3L4.5 1.7l3.6 3.6" fill="none" stroke="#505050" stroke-width="2.2"/></svg>
<svg style="left:898px;top:681px" width="9" height="6" viewBox="0 0 9 6"><path d="M0.9 0.7L4.5 4.3l3.6-3.6" fill="none" stroke="#505050" stroke-width="2.2"/></svg>
<div class="t" style="left:846px;top:168px">От...</div>
<svg style="left:819px;top:168px" width="16" height="16" viewBox="0 0 16 16"><path d="M1.5 14V6.5h4.5l1 1h5.5V10" fill="#e6c26a" stroke="#c09a48" stroke-width=".8"/><path d="M1 15.5l2.2-6h12.3l-2.2 6z" fill="#f5d98e" stroke="#c09a48" stroke-width=".8"/><ellipse cx="8.8" cy="5.6" rx="1.3" ry=".8" fill="#3a8ae0"/><path d="M11 2.5h4" stroke="#3ad03a" stroke-width="1.2"/></svg>
<div class="t" style="left:846px;top:192px">Со...</div>
<svg style="left:819px;top:192px" width="16" height="16" viewBox="0 0 16 16"><defs><linearGradient id="ry200" x1="0" x2="1"><stop offset="0" stop-color="#c8d4e0"/><stop offset=".5" stop-color="#7d8fa2"/><stop offset="1" stop-color="#4e5e70"/></linearGradient></defs><path d="M1 2.5h14.5l-5.5 6v7h-3.5v-7z" fill="url(#ry200)" stroke="#4a5868" stroke-width=".8"/><path d="M1.5 2h14v1.6h-14z" fill="#e4ecf4"/><path d="M5.5 1.5l1 2.2 2.3-.6-1.3 2 1.6 1.7-2.3.2-.3 2.4-1.4-1.9-2.1 1 .7-2.2L2 5.2l2.3-.7z" fill="#f8a818" stroke="#f0c040" stroke-width=".4"/></svg>
<div class="t" style="left:846px;top:216px">И...</div>
<div class="sep" style="left:820px;top:236px;width:68px"></div>
<div class="t" style="left:846px;top:241px">Фи...</div>
<svg style="left:819px;top:241px" width="16" height="16" viewBox="0 0 16 16"><defs><linearGradient id="rf249" x1="0" x2="1"><stop offset="0" stop-color="#b8c6d4"/><stop offset=".5" stop-color="#7d8fa2"/><stop offset="1" stop-color="#4e5e70"/></linearGradient></defs><path d="M0.5 2h15l-5.5 6v7h-4v-7z" fill="url(#rf249)" stroke="#4a5868" stroke-width=".8"/><path d="M1 1.7h14v2H1z" fill="#e4ecf4" stroke="#6a7888" stroke-width=".6"/></svg>
<div class="t" style="left:846px;top:265px">Св...</div>
<svg style="left:819px;top:264px" width="16" height="16" viewBox="0 0 16 16"><rect x="1.5" y="1.5" width="13" height="13" fill="#f8fafc" stroke="#8a96a2"/><path d="M2 4h12" stroke="#c0c8d0" stroke-width="1.5"/><path d="M4 7h1M4 9h1M4 11h1" stroke="#3a8ae0"/><path d="M6 7h6M6 9h6M6 11h6" stroke="#9aa6b2" stroke-width=".8"/><path d="M6 15h4" stroke="#20a0e8" stroke-width="1.5"/></svg>
<div class="t" style="left:846px;top:290px">На...</div>
<svg style="left:819px;top:289px" width="16" height="16" viewBox="0 0 16 16"><path d="M1.5 4.5c0-2 1-3 2.5-3s2.5 1 2.5 3v7h-5z" fill="#c8d2dc" stroke="#3a4450"/><path d="M9.5 4.5c0-2 1-3 2.5-3s2.5 1 2.5 3v7h-5z" fill="#c8d2dc" stroke="#3a4450"/><path d="M6.5 5h3v3h-3z" fill="#3a4450"/><path d="M2 13.5c1 1.5 3 1.5 4 0M10 13.5c1 1.5 3 1.5 4 0" fill="none" stroke="#2a8ae8" stroke-width="1.2"/></svg>
<div class="t" style="left:846px;top:314px">Со...</div>
<svg style="left:819px;top:313px" width="16" height="16" viewBox="0 0 16 16"><path d="M1.5 1.5h12l1 1v12h-13z" fill="#5a5a5a" stroke="#2a2a2a"/><rect x="4" y="2" width="7.5" height="5" fill="#f0f0f0"/><rect x="3.5" y="9.5" width="9" height="5" fill="#d8d8d8" stroke="#555" stroke-width=".6"/></svg>
<div class="t" style="left:846px;top:338px">Эк...</div>
<div class="t" style="left:846px;top:362px">Ко...</div>
<div class="t" style="left:846px;top:386px">Пр...</div>
<div class="sep" style="left:820px;top:405px;width:68px"></div>
<div class="t" style="left:846px;top:410px">Вид</div>
<svg style="left:881px;top:413px" width="5" height="10" viewBox="0 0 5 10"><path d="M0 0L5 5 0 10z" fill="#000"/></svg>
<div class="sep" style="left:820px;top:430px;width:68px"></div>
<div class="t" style="left:846px;top:435px">Уд...</div>
<svg style="left:819px;top:435px" width="16" height="16" viewBox="0 0 16 16"><path d="M2.5 2.5l11 11M13.5 2.5l-11 11" stroke="#e02020" stroke-width="3.2" stroke-linecap="round"/></svg>
<div class="t" style="left:846px;top:459px">Пе...</div>
<svg style="left:819px;top:459px" width="16" height="16" viewBox="0 0 16 16"><rect x="0.5" y="4.5" width="15" height="8" fill="#fff" stroke="#8a9aaa"/><rect x="2" y="6" width="8" height="5" fill="#1a7ae8"/><path d="M12.5 2v13M10.5 2h4M10.5 15h4" stroke="#505050" stroke-width="1"/></svg>
<div class="t" style="left:846px;top:484px">Об...</div>
<svg style="left:819px;top:484px" width="16" height="16" viewBox="0 0 16 16"><path d="M2.5 0.5h8l3 3v12h-11z" fill="#fff" stroke="#9aa4ae"/><path d="M5 9a3 3 0 1 0 3-3" fill="none" stroke="#2aa02a" stroke-width="1.8"/><path d="M7 4l2.5 2-2.5 2z" fill="#2aa02a"/></svg>
<div class="sep" style="left:820px;top:503px;width:68px"></div>
<div class="t" style="left:846px;top:508px">Сп...</div>
<svg style="left:819px;top:508px" width="16" height="16" viewBox="0 0 16 16"><defs><linearGradient id="rh516" x1="0" x2="1"><stop offset="0" stop-color="#1a3a98"/><stop offset=".4" stop-color="#3a66d0"/><stop offset="1" stop-color="#5a88e0"/></linearGradient></defs><rect x="1.5" y="0.5" width="12" height="15" fill="url(#rh516)" stroke="#1b337a"/><path d="M5.2 5C5.2 3.3 6.1 2.6 7.5 2.6S9.8 3.4 9.8 4.8c0 1.9-2.1 2.1-2.1 4.3" fill="none" stroke="#fff" stroke-width="1.5"/><circle cx="7.7" cy="12" r="1" fill="#fff"/></svg>
<svg style="left:881px;top:511px" width="5" height="10" viewBox="0 0 5 10"><path d="M0 0L5 5 0 10z" fill="#000"/></svg>
<div class="t" style="left:846px;top:562px">Св...</div>
<svg style="left:819px;top:562px" width="16" height="16" viewBox="0 0 16 16"><rect x="1.5" y="1.5" width="13" height="13" fill="#f8fafc" stroke="#8a96a2"/><path d="M2 4h12" stroke="#c0c8d0" stroke-width="1.5"/><path d="M4 7h1M4 9h1M4 11h1" stroke="#3a8ae0"/><path d="M6 7h6M6 9h6M6 11h6" stroke="#9aa6b2" stroke-width=".8"/><path d="M6 15h4" stroke="#20a0e8" stroke-width="1.5"/></svg>
<div class="t" style="left:846px;top:586px">Пр...</div>
<svg style="left:819px;top:586px" width="16" height="16" viewBox="0 0 16 16"><rect x="2.5" y="1.5" width="12" height="13" fill="#f6f6f6" stroke="#8a8a8a"/><path d="M3 1.5h11" stroke="#8a3030" stroke-width="1"/><path d="M3 14.5h12" stroke="#b0b0b0" stroke-width="1.2"/><circle cx="9" cy="8" r="4.3" fill="#e8f4fa" stroke="#5a6470" stroke-width="1"/><path d="M9 5.2V8h2.2" fill="none" stroke="#1a3a8a" stroke-width="1"/><path d="M4 1l.8 1.8 1.9-.4-1.1 1.6 1.3 1.4-1.9.1-.3 1.9-1.1-1.6-1.8.7.6-1.8L1 3.3l1.9-.5z" fill="#f8a818"/></svg>
<div class="t" style="left:846px;top:610px">Ко...</div>
<svg style="left:819px;top:610px" width="16" height="16" viewBox="0 0 16 16"><path d="M0.5 0.5h6l2 2v9h-8z" fill="#fff" stroke="#8a8a8a"/><path d="M6.5 5.5h5l3 3v7h-8z" fill="#fff" stroke="#8a8a8a"/><path d="M2 4.5h2M2 6.5h4M2 8.5h4M8 9.5h2M8 11.5h5M8 13.5h5" stroke="#3a7ad0" stroke-width=".9"/></svg>
<svg style="left:881px;top:613px" width="5" height="10" viewBox="0 0 5 10"><path d="M0 0L5 5 0 10z" fill="#000"/></svg>
<div class="t" style="left:846px;top:634px">Со...</div>
<svg style="left:819px;top:634px" width="16" height="16" viewBox="0 0 16 16"><path d="M1.5 1.5h12l1 1v12h-13z" fill="#5a5a5a" stroke="#2a2a2a"/><rect x="4" y="2" width="7.5" height="5" fill="#f0f0f0"/><rect x="3.5" y="9.5" width="9" height="5" fill="#d8d8d8" stroke="#555" stroke-width=".6"/></svg>
<div class="sep" style="left:820px;top:654px;width:68px"></div>
<div class="t" style="left:846px;top:660px">Об...</div>
<svg style="left:819px;top:659px" width="16" height="16" viewBox="0 0 16 16"><path d="M2.5 0.5h8l3 3v12h-11z" fill="#fff" stroke="#9aa4ae"/><path d="M5 9a3 3 0 1 0 3-3" fill="none" stroke="#2aa02a" stroke-width="1.8"/><path d="M7 4l2.5 2-2.5 2z" fill="#2aa02a"/></svg>
<div class="sep" style="left:820px;top:679px;width:68px"></div>
<div class="t" style="left:846px;top:684px">Сп...</div>
<svg style="left:819px;top:683px" width="16" height="16" viewBox="0 0 16 16"><defs><linearGradient id="rh691" x1="0" x2="1"><stop offset="0" stop-color="#1a3a98"/><stop offset=".4" stop-color="#3a66d0"/><stop offset="1" stop-color="#5a88e0"/></linearGradient></defs><rect x="1.5" y="0.5" width="12" height="15" fill="url(#rh691)" stroke="#1b337a"/><path d="M5.2 5C5.2 3.3 6.1 2.6 7.5 2.6S9.8 3.4 9.8 4.8c0 1.9-2.1 2.1-2.1 4.3" fill="none" stroke="#fff" stroke-width="1.5"/><circle cx="7.7" cy="12" r="1" fill="#fff"/></svg>
<svg style="left:881px;top:686px" width="5" height="10" viewBox="0 0 5 10"><path d="M0 0L5 5 0 10z" fill="#000"/></svg>

<!-- STATUS -->
<div class="a" style="left:33px;top:694px;width:880px;height:23px;background:#f0f0f0"></div>
<div class="a" style="left:297px;top:693px;width:616px;height:1px;background:#dadada"></div>
<div class="a" style="left:692px;top:696px;width:1px;height:20px;background:#d0d0d0"></div>
<div class="a" style="left:825px;top:696px;width:1px;height:20px;background:#d0d0d0"></div>
</body></html>
